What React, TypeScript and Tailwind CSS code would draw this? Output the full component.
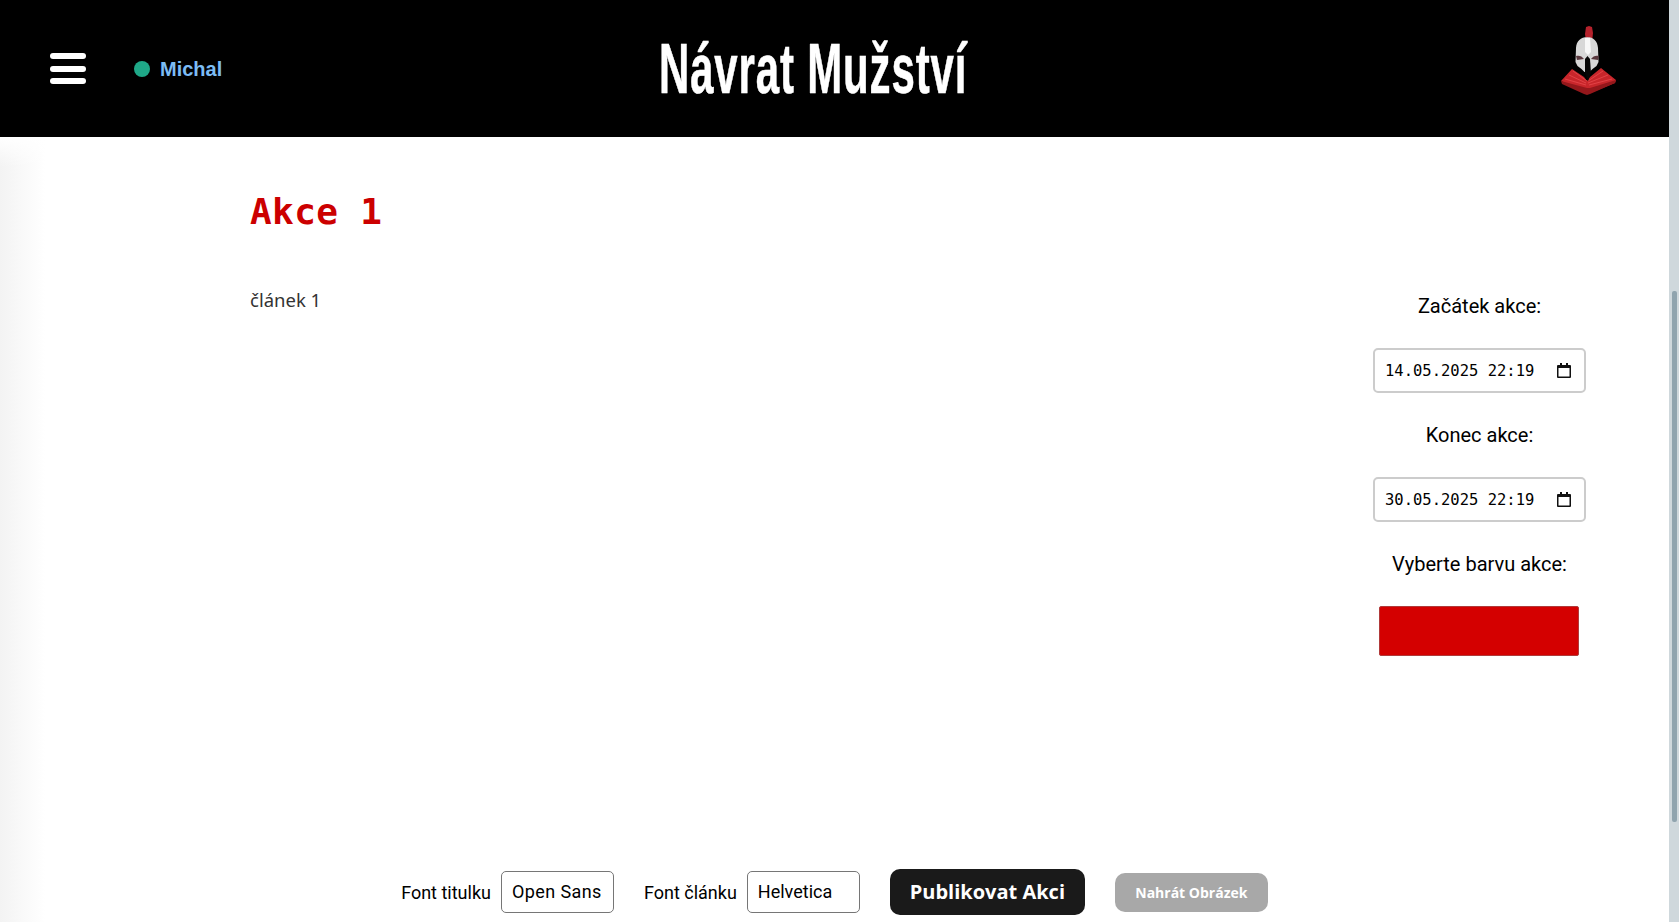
import React from "react";

function Logo() {
  return (
    <svg width="56" height="69" viewBox="0 0 56 69" className="block">
      <path d="M25 1l3-1 3 1 1 6-1 9-2 4h-3l-1-5-1-7z" fill="#b5222c" />
      <path d="M0 55L11 43l12 8 3 4 3-4 11-9 15 12-1 3-27 11-3-2z" fill="#c8262b" />
      <path d="M0 55l26 7v7l-3-1L1 58zM55 54l-26 8-3 0v7l3-1 25-11z" fill="#94171b" />
      <path d="M4 53l21 6M8 49l17 8M12 45l14 10M51 53l-23 6M47 49l-20 8M42 45l-15 10" stroke="#e8494c" strokeWidth="0.8" fill="none" />
      <path d="M26.500 11c-7 0-11 4-11.500 11l-.5 14 2 4 4 3 3 3h5l3-3 4-3 2-4-.5-14c-.5-7-4.500-11-11-11z" fill="#d8d8d8" />
      <path d="M24 12h5l1 14-3 3-3-3z" fill="#f8f8f8" />
      <path d="M15 30c3-1 6 0 8 3l-7 1zM38 30c-3-1-6 0-8 3l7 1z" fill="#5b3a40" />
      <path d="M24 33l2.500-3 2.500 3 1 14-3 8-3-8z" fill="#060606" />
    </svg>
  );
}

function DateField({ value }: { value: string }) {
  return (
    <div className="flex items-center justify-between w-[213px] h-[45px] pl-[10px] pr-[13px] bg-white border-2 border-[#cccccc] rounded-[5px]">
      <span className="pt-[2px] text-[15.5px] text-black [font-family:'DejaVu_Sans_Mono',monospace] whitespace-pre">{value}</span>
      <svg width="14" height="15" viewBox="0 0 14 15" className="block">
        <path d="M3 0h2v2h4V0h2v2h2a1 1 0 0 1 1 1v11a1 1 0 0 1-1 1H1a1 1 0 0 1-1-1V3a1 1 0 0 1 1-1h2zM1.500 5v8.500h11V5z" fill="#111" />
      </svg>
    </div>
  );
}

function FieldLabel({ children }: { children: React.ReactNode }) {
  return <div className="text-[20px] leading-[24px] text-black text-center [font-family:Roboto,sans-serif]">{children}</div>;
}

function FontField({ label, value, wide }: { label: string; value: string; wide?: boolean }) {
  return (
    <div className="flex items-center gap-[10px]">
      <span className="text-[18px] text-black [font-family:Roboto,sans-serif]">{label}</span>
      <div className={wide
        ? "w-[113px] h-[42px] flex items-center pl-[10px] pb-[2px] text-[18px] tracking-[0.4px] text-black bg-white border border-[#767676] rounded-[5px] [font-family:Roboto,sans-serif]"
        : "w-[113px] h-[42px] flex items-center pl-[10px] pb-[2px] text-[18px] text-black bg-white border border-[#767676] rounded-[5px] [font-family:Roboto,sans-serif]"}>{value}</div>
    </div>
  );
}

export default function App() {
  return (
    <div className="flex w-[1679px] h-[922px] overflow-hidden bg-white">
      <div className="flex flex-col w-[1669px] h-full">
        <header className="flex items-center h-[137px] bg-black shrink-0">
          <div className="flex flex-col gap-[6.500px] ml-[50px] w-[36px]">
            <div className="h-[6px] rounded-full bg-white" />
            <div className="h-[6px] rounded-full bg-white" />
            <div className="h-[6px] rounded-full bg-white" />
          </div>
          <div className="ml-[48px] w-[16px] h-[16px] rounded-full bg-[#1fa888]" />
          <span className="ml-[10px] w-[62px] text-[20px] font-bold text-[#7cbcf5] [font-family:'Liberation_Sans',sans-serif]">Michal</span>
          <h1 className="ml-[437px] w-[308px] whitespace-nowrap text-[70px] leading-none font-bold tracking-[1.4px] text-white origin-left scale-x-[0.6] [-webkit-text-stroke:0.6px_white] [font-family:'Liberation_Sans',sans-serif]">Návrat Mužství</h1>
          <div className="ml-auto mr-[52px] mb-[17px]"><Logo /></div>
        </header>
        <main className="flex-1 flex flex-col bg-[linear-gradient(180deg,#ffffff,#ffffff00_30px),linear-gradient(90deg,#f3f3f3,#ffffff_45px)]">
          <div className="flex flex-1 min-h-0">
            <div className="flex-1 pl-[250px] pt-[53px]">
              <h2 className="text-[36px] leading-[44px] font-bold tracking-[0.4px] text-[#cc0000] [font-family:'DejaVu_Sans_Mono',monospace]">Akce 1</h2>
              <p className="mt-[52px] text-[18.5px] leading-[28px] text-[#333333] [font-family:'Noto_Sans',sans-serif]">článek 1</p>
            </div>
            <div className="flex flex-col items-center w-[213px] mr-[83px] pt-[157px]">
              <FieldLabel>Začátek akce:</FieldLabel>
              <div className="mt-[30px]"><DateField value="14.05.2025 22:19" /></div>
              <div className="mt-[30px]"><FieldLabel>Konec akce:</FieldLabel></div>
              <div className="mt-[30px]"><DateField value="30.05.2025 22:19" /></div>
              <div className="mt-[30px]"><FieldLabel>Vyberte barvu akce:</FieldLabel></div>
              <div className="mt-[30px] w-[200px] h-[50px] mr-[1px] bg-[#d40000] border border-[#b03a3a] rounded-[2px]" />
            </div>
          </div>
          <div className="flex items-center justify-center gap-[30px] h-[46px] mb-[7px] shrink-0">
            <FontField label="Font titulku" value="Open Sans" wide />
            <FontField label="Font článku" value="Helvetica" />
            <button className="w-[195px] h-[46px] rounded-[10px] bg-[#1a1a1a] text-white text-[20px] font-bold [font-family:'Open_Sans',sans-serif]">Publikovat Akci</button>
            <button className="w-[153px] h-[39px] rounded-[10px] bg-[#a8a8a8] text-white text-[14px] font-bold [font-family:'Open_Sans',sans-serif]">Nahrát Obrázek</button>
          </div>
        </main>
      </div>
      <div className="w-[10px] h-full bg-[#cfd8dc] pt-[291px] pl-[3px] shrink-0">
        <div className="w-[5px] h-[531px] rounded-[2px] bg-[#90a4ae]" />
      </div>
    </div>
  );
}
